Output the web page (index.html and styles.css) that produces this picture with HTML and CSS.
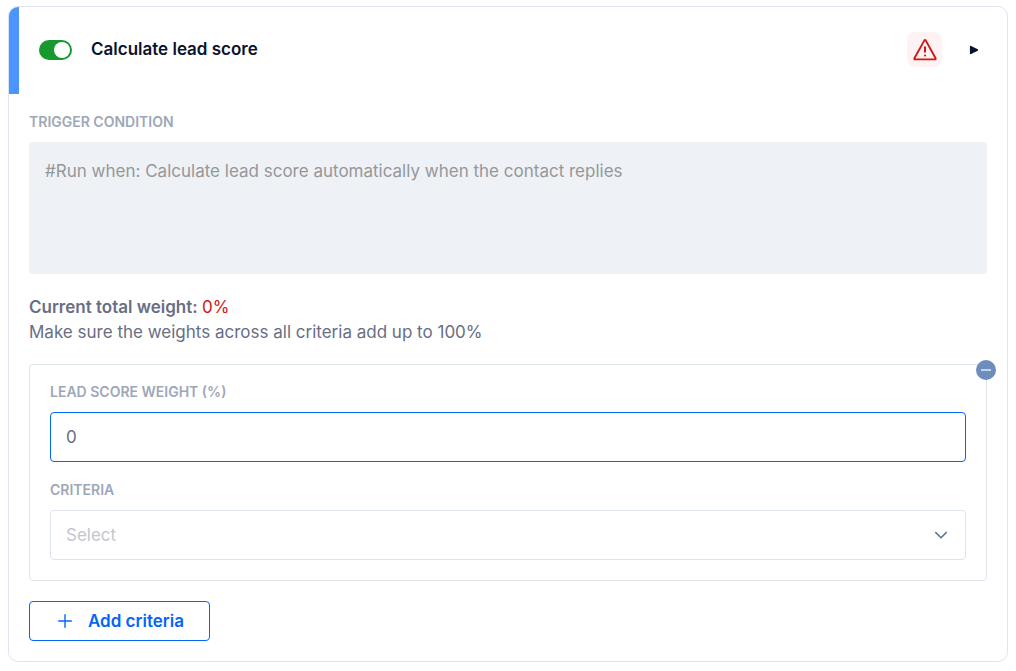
FILE: index.html
```html
<!DOCTYPE html>
<html lang="en">
<head>
<meta charset="utf-8">
<meta name="viewport" content="width=device-width, initial-scale=1">
<title>Calculate lead score</title>
<link rel="stylesheet" href="styles.css">
</head>
<body>
<main class="card">
  <header class="card-header">
    <input class="toggle" type="checkbox" role="switch" id="enabled" checked>
    <label class="card-title" for="enabled">Calculate lead score</label>
    <div class="header-actions">
      <span class="warning" role="img" aria-label="Warning">
        <svg width="24" height="24" viewBox="0 0 24 24" fill="none" stroke="#cf1717" stroke-linejoin="round" stroke-linecap="round">
          <path d="M11.4 2.4a.8.8 0 0 1 1.3 0L22.6 20.2a.8.8 0 0 1-.7 1.2H2.1a.8.8 0 0 1-.7-1.2z" stroke-width="1.9"/>
          <path d="M12 9.2v4.6" stroke-width="2"/>
          <circle cx="12" cy="17.5" r="1.1" fill="#cf1717" stroke="none"/>
        </svg>
      </span>
      <button class="expand" type="button" aria-label="Expand">
        <svg width="10" height="10" viewBox="0 0 10 10"><path d="M1.7 1.6 8.4 5 1.7 8.4z" fill="#0b132e" stroke="#0b132e" stroke-width="1.6" stroke-linejoin="round"/></svg>
      </button>
    </div>
  </header>
  <form class="card-body">
    <div class="field">
      <label class="field-label" for="trigger">TRIGGER CONDITION</label>
      <textarea class="trigger" id="trigger" disabled>#Run when: Calculate lead score automatically when the contact replies</textarea>
    </div>
    <div class="summary">
      <p class="total">Current total weight: <span class="total-value">0%</span></p>
      <p class="hint">Make sure the weights across all criteria add up to 100%</p>
    </div>
    <section class="criterion">
      <button class="remove" type="button" aria-label="Remove criteria"></button>
      <div class="field">
        <label class="field-label" for="weight">LEAD SCORE WEIGHT (%)</label>
        <input class="control control-active" id="weight" type="text" inputmode="numeric" value="0">
      </div>
      <div class="field">
        <label class="field-label" for="criteria">CRITERIA</label>
        <div class="select-wrap">
          <select class="control control-select" id="criteria"><option>Select</option></select>
          <svg class="chevron" width="14" height="10" viewBox="0 0 14 10" fill="none" stroke="#5a7099" stroke-width="1.5"><path d="m1.3 2.1 5.7 5.7 5.7-5.7"/></svg>
        </div>
      </div>
    </section>
    <button class="add" type="button">
      <svg width="14" height="14" viewBox="0 0 14 14" stroke="#0465f7" stroke-width="1.4" stroke-linecap="round"><path d="M7 .7v12.6M.7 7h12.6"/></svg>
      <span>Add criteria</span>
    </button>
  </form>
</main>
</body>
</html>
```
FILE: styles.css
```css
* { box-sizing: border-box; }
body {
  margin: 6px 8px;
  background: #fff;
  color: #686e85;
  font: 400 17px/25px Inter, "Liberation Sans", sans-serif;
}
p { margin: 0; }
button, input, textarea, select { font: inherit; margin: 0; }
.card {
  border: 1px solid #dee4ef;
  border-radius: 10px;
  overflow: hidden;
}
.card-header {
  display: flex;
  align-items: center;
  height: 87px;
  padding: 0 25px 2px 20px;
  border-left: 10px solid #4c94ff;
}
.toggle {
  appearance: none;
  display: flex;
  align-items: center;
  justify-content: flex-end;
  width: 33px;
  height: 20px;
  padding: 2px;
  border-radius: 10px;
  background: #17992f;
}
.toggle::before {
  content: "";
  width: 16px;
  height: 16px;
  border-radius: 50%;
  background: #fff;
}
.toggle:not(:checked) { justify-content: flex-start; background: #a0a9ba; }
.card-title {
  margin-left: 19px;
  color: #0b132e;
  font-weight: 600;
}
.header-actions {
  display: flex;
  align-items: center;
  gap: 24px;
  margin-left: auto;
}
.warning {
  display: grid;
  place-items: center;
  width: 35px;
  height: 35px;
  border-radius: 8px;
  background: #fff2f2;
}
.expand {
  display: grid;
  place-items: center;
  width: 16px;
  height: 16px;
  padding: 0;
  border: 0;
  background: none;
}
.card-body {
  display: flex;
  flex-direction: column;
  padding: 18px 20px 20px;
}
.field {
  display: flex;
  flex-direction: column;
  gap: 10px;
}
.field-label {
  color: #9da7b8;
  font-size: 14px;
  font-weight: 600;
  line-height: 20px;
}
.trigger {
  height: 132px;
  padding: 17px 16px;
  border: 0;
  border-radius: 4px;
  resize: none;
  background: #eef1f6;
  color: #969799;
}
.summary { margin: 21px 0 19px; }
.total { font-weight: 600; }
.total-value { color: #cf1717; font-weight: 400; }
.criterion {
  position: relative;
  display: flex;
  flex-direction: column;
  gap: 18px;
  padding: 17px 20px 20px;
  border: 1px solid #dee4ef;
  border-radius: 4px;
}
.remove {
  position: absolute;
  top: -5px;
  right: -10px;
  display: grid;
  place-items: center;
  width: 20px;
  height: 20px;
  padding: 0;
  border: 0;
  border-radius: 50%;
  background: #6d8dbd;
}
.remove::before {
  content: "";
  width: 10px;
  height: 2px;
  background: #c7d2e5;
}
.control {
  width: 100%;
  height: 50px;
  padding: 0 15px;
  border: 1px solid #dee4ef;
  border-radius: 4px;
  outline: 0;
  background: #fff;
  color: #686e85;
}
.control-active { border-color: #0465f7; }
.select-wrap { position: relative; display: flex; }
.control-select { appearance: none; color: #c3c6d1; }
.chevron {
  position: absolute;
  top: 20px;
  right: 18px;
  pointer-events: none;
}
.add {
  display: flex;
  align-items: center;
  align-self: flex-start;
  gap: 16px;
  height: 40px;
  margin-top: 20px;
  padding: 0 25px 0 28px;
  border: 1px solid #0465f7;
  border-radius: 4px;
  background: #fff;
  color: #0465f7;
  font-weight: 600;
}
```
